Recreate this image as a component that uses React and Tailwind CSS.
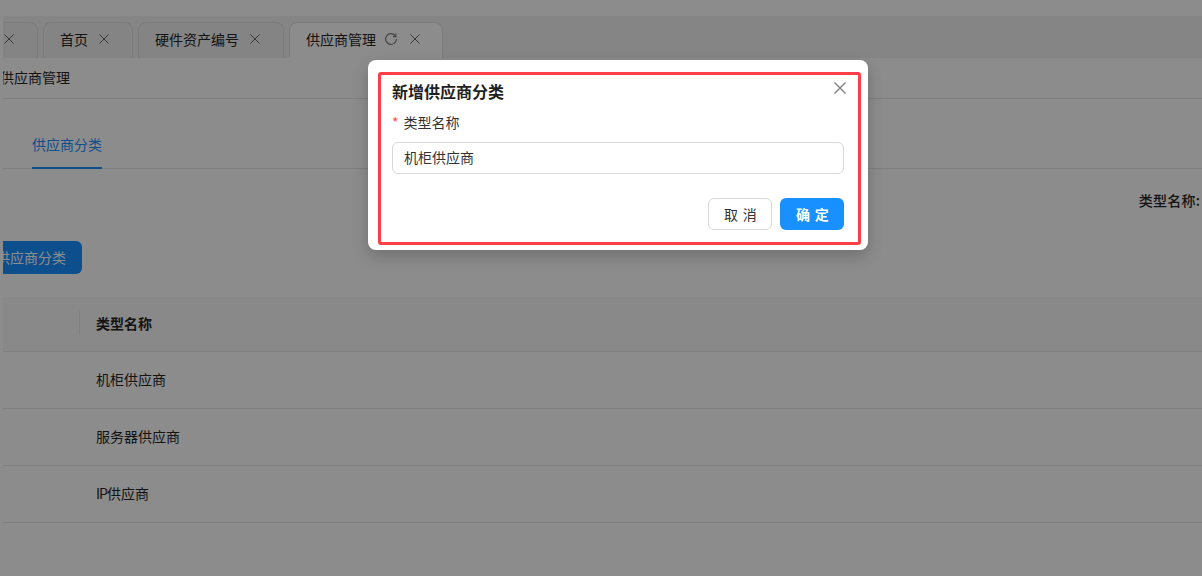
import React from "react";

const font = { fontFamily: '"Noto Sans CJK SC", "Liberation Sans", sans-serif' };

const X = ({ size = 10, color = "#595959", width = 1.1 }) => (
  <svg width={size} height={size} viewBox="0 0 12 12" fill="none" stroke={color} strokeWidth={width} className="shrink-0">
    <path d="M0.5 0.5 L11.5 11.5 M11.5 0.5 L0.5 11.5" />
  </svg>
);

const Refresh = () => (
  <svg width="14" height="14" viewBox="0 0 14 14" fill="none" stroke="#7a7a7a" strokeWidth="1.1" className="shrink-0">
    <path d="M11.6 4.2 A5.4 5.4 0 1 0 12.4 7" />
    <path d="M11.9 1.6 V4.6 H8.9" />
  </svg>
);

function Tab({ children, className = "" }) {
  return (
    <div className={"flex h-9 items-center rounded-t-lg border border-b-0 border-[#e0e0e0] pb-1 text-sm text-[#262626] " + className}>
      {children}
    </div>
  );
}

function Btn({ children, className = "" }) {
  return (
    <div className={"flex h-8 w-16 items-center justify-center rounded-md pb-px pl-px text-sm tracking-[0.34em] " + className}>
      <span className="-mr-[0.34em]">{children}</span>
    </div>
  );
}

export default function App() {
  return (
    <div style={font} className="relative h-[576px] w-[1202px] overflow-hidden bg-white pl-[3px]">
      <div className="h-full overflow-hidden">
        <div className="-ml-[3px] w-[1202px] pt-4">
          <div className="flex h-[42px] items-end gap-[5px] bg-[#f2f2f2]">
            <Tab className="w-[38px] justify-end rounded-tl-none border-l-0 bg-[#f0f0f0] pr-[23px]">
              <X />
            </Tab>
            <Tab className="w-[90px] bg-[#f0f0f0] pl-4">
              <span>首页</span>
              <span className="ml-[11px]"><X /></span>
            </Tab>
            <Tab className="w-[146px] bg-[#f0f0f0] pl-4">
              <span>硬件资产编号</span>
              <span className="ml-[11px]"><X /></span>
            </Tab>
            <Tab className="w-[154px] bg-white pl-4 text-[#1890ff]">
              <span>供应商管理</span>
              <span className="ml-[8px]"><Refresh /></span>
              <span className="ml-[12px]"><X /></span>
            </Tab>
          </div>
          <div className="flex h-[41px] items-center rounded-bl-sm border-b border-[#e8e8e8] pb-[2px] text-sm text-[#262626]">
            <span>供应商管理</span>
          </div>
          <div className="mt-[27px] flex h-[43px] border-b border-[#e8e8e8] pl-8">
            <div className="flex h-[43px] items-center border-b-2 border-[#1890ff] pb-[6px] text-sm text-[#1890ff]">供应商分类</div>
          </div>
          <div className="mt-[21px] flex h-[20px] items-center justify-end pr-[2px] text-sm font-medium text-[#262626]">
            <span className="tracking-[0.2px]">类型名称:</span>
          </div>
          <div className="mt-[31px] flex h-[33px] w-[82px] items-center justify-end rounded-r-md bg-[#1890ff] pb-[2px] pr-4 text-sm text-white">
            <span className="whitespace-nowrap">供应商分类</span>
          </div>
          <div className="mt-[23px] text-sm text-[#262626]">
            <div className="flex h-[55px] items-center border-b border-[#e8e8e8] bg-[#fafafa] pb-[3px] font-bold">
              <div className="h-6 w-[80px] border-r border-[#e8e8e8]" />
              <div className="pl-4">类型名称</div>
            </div>
            {[["", "机柜供应商"], ["", "服务器供应商"], ["IP", "供应商"]].map(([latin, t]) => (
              <div key={t + latin} className="flex h-[57px] items-center rounded-bl-sm border-b border-[#e8e8e8] pb-[2px] pl-24">
                {latin && <span className="tracking-[-1px]">{latin}</span>}
                <span>{t}</span>
              </div>
            ))}
          </div>
        </div>
      </div>

      <div className="absolute inset-0 bg-black/45" />

      <div className="absolute left-[368px] top-[60px] h-[190px] w-[500px] rounded-lg bg-white px-6 pt-5 shadow-[0_6px_16px_rgba(0,0,0,0.2)]">
        <div className="text-base font-bold leading-[22px] text-[#1f1f1f]">新增供应商分类</div>
        <div className="mt-[10px] flex h-[20px] items-center text-sm text-[#333333]">
          <span className="mr-[5px] text-[#ff4d4f]">*</span>
          <span>类型名称</span>
        </div>
        <div className="mt-[10px] flex h-8 items-center rounded-md border border-[#d9d9d9] pb-[2px] pl-[11px] text-sm text-[#333333]">机柜供应商</div>
        <div className="mt-6 flex justify-end gap-2">
          <Btn className="border border-[#d9d9d9] text-[#333333]">取消</Btn>
          <Btn className="bg-[#1890ff] font-bold text-white">确定</Btn>
        </div>
        <div className="absolute right-[22px] top-[22px]"><X size={12} color="#808080" width={1.4} /></div>
      </div>

      <div className="pointer-events-none absolute left-[378px] top-[72px] h-[173px] w-[483px] rounded-[3px] border-[3px] border-[#ff4049]" />
    </div>
  );
}
